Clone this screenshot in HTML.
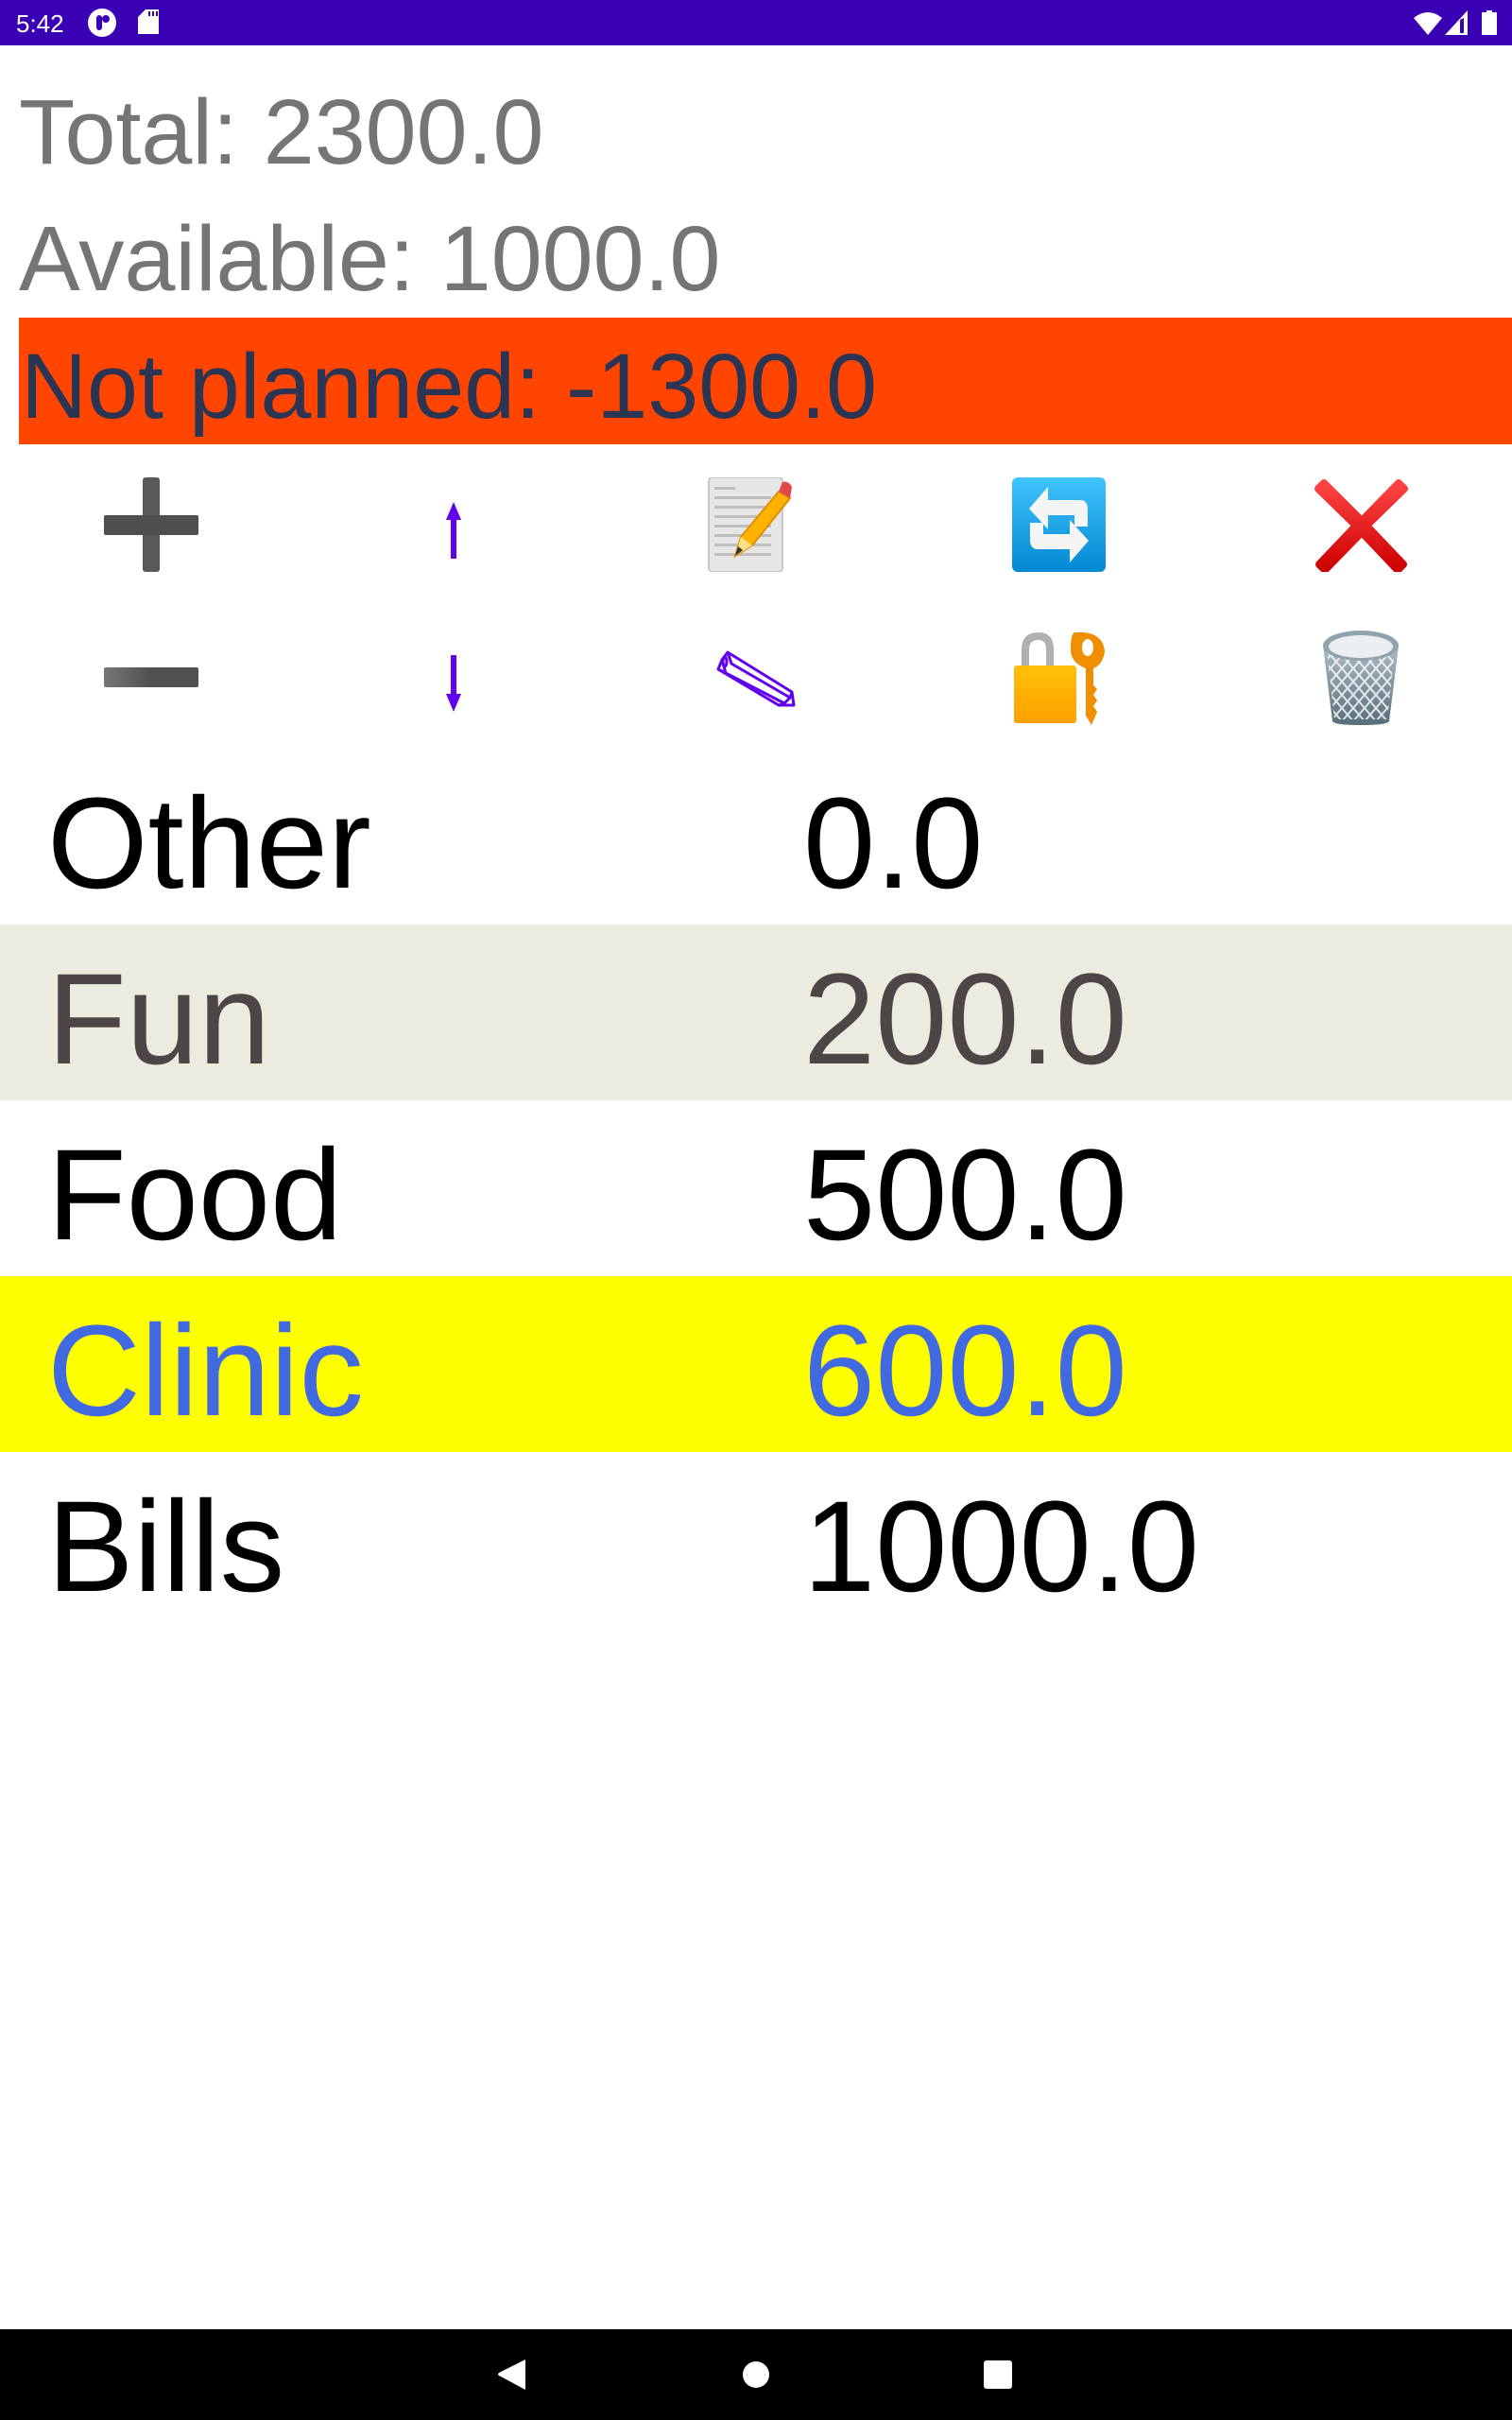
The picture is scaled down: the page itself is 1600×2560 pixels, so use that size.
<!DOCTYPE html>
<html><head><meta charset="utf-8"><style>
*{margin:0;padding:0;box-sizing:border-box}
body{width:1600px;height:2560px;position:relative;background:#fff;overflow:hidden;font-family:"Liberation Sans",sans-serif}
.a{position:absolute;white-space:nowrap;line-height:1}
.row{position:absolute;left:0;width:1600px;height:186px}
.row .n{position:absolute;left:50px;top:32px;font-size:137px;line-height:1}
.row .v{position:absolute;left:850px;top:32px;font-size:137px;line-height:1}
svg{position:absolute}
</style></head><body>
<div class="a" style="left:0;top:0;width:1600px;height:48px;background:#3a00b3"></div>
<div class="a" style="left:17px;top:12px;font-size:26px;color:#fff">5:42</div>
<svg style="left:92px;top:8px" width="32" height="32" viewBox="0 0 32 32"><circle cx="16" cy="16" r="15" fill="#fff"/><rect x="10" y="8" width="6" height="16" rx="3" fill="#3a00b3"/><circle cx="20" cy="12" r="4" fill="#3a00b3"/></svg>
<svg style="left:146px;top:10px" width="24" height="26" viewBox="0 0 24 26"><path d="M8 0H22V26H0V8Z" fill="#fff"/><rect x="11" y="2" width="2" height="5" fill="#3a00b3"/><rect x="15" y="2" width="2" height="5" fill="#3a00b3"/><rect x="19" y="2" width="2" height="5" fill="#3a00b3"/></svg>
<svg style="left:1496px;top:11px" width="30" height="26" viewBox="0 0 30 26"><path d="M0 8Q15 -4 30 8L15 26Z" fill="#fff"/></svg>
<svg style="left:1529px;top:11px" width="24" height="26" viewBox="0 0 24 26"><path d="M24 0V26H0Z" fill="#fff"/><path d="M16 10V24H20V8Z" fill="#3a00b3"/></svg>
<svg style="left:1568px;top:11px" width="16" height="26" viewBox="0 0 16 26"><rect x="5" y="0" width="6" height="3" fill="#fff"/><rect x="0" y="2" width="16" height="24" rx="1" fill="#fff"/></svg>

<div class="a" style="left:20px;top:91px;font-size:97px;color:#757575">Total: 2300.0</div>
<div class="a" style="left:20px;top:225px;font-size:97px;color:#757575">Available: 1000.0</div>
<div class="a" style="left:20px;top:336px;width:1580px;height:134px;background:#ff4500"></div>
<div class="a" style="left:22px;top:360px;font-size:97px;color:#2b3452">Not planned: -1300.0</div>

<svg style="left:110px;top:505px" width="100" height="100" viewBox="0 0 100 100"><rect x="41" y="0" width="18" height="100" rx="3" fill="#595959"/><rect x="0" y="40" width="100" height="21" rx="2" fill="#4f4f4f"/></svg>
<svg style="left:110px;top:706px" width="100" height="22" viewBox="0 0 100 22"><defs><linearGradient id="gm"><stop offset="0" stop-color="#777"/><stop offset=".5" stop-color="#505050"/></linearGradient></defs><rect x="0" y="0" width="100" height="21" rx="2" fill="url(#gm)"/></svg>
<svg style="left:468px;top:530px" width="24" height="64" viewBox="0 0 24 64"><path d="M12 1L4 20H9V61H15V20H20Z" fill="#6200ee"/></svg>
<svg style="left:468px;top:690px" width="24" height="64" viewBox="0 0 24 64"><path d="M12 63L4 44H9V3H15V44H20Z" fill="#6200ee"/></svg>
<svg style="left:748px;top:505px" width="104" height="100" viewBox="0 0 104 100"><rect x="2" y="0" width="78" height="100" rx="4" fill="#e6e6e6" stroke="#c8c8c8" stroke-width="2"/><g fill="#bdbdbd"><rect x="8" y="10" width="22" height="3"/><rect x="8" y="20" width="60" height="3"/><rect x="8" y="30" width="60" height="3"/><rect x="8" y="40" width="60" height="3"/><rect x="8" y="50" width="60" height="3"/><rect x="8" y="60" width="60" height="3"/><rect x="8" y="70" width="60" height="3"/><rect x="8" y="80" width="60" height="3"/></g><path d="M30 83L36 63L76 15L88 22L48 72Z" fill="#ffb300" stroke="#e08e00" stroke-width="2"/><path d="M76 15L80 5Q86 3 90 10L88 22Z" fill="#e04848"/><path d="M30 83L36 63L48 72Z" fill="#ffe08a"/><path d="M30 83L33 73L38 77Z" fill="#333"/></svg>
<svg style="left:1071px;top:505px" width="99" height="100" viewBox="0 0 99 100"><defs><linearGradient id="gb" x1="0" y1="0" x2="0" y2="1"><stop offset="0" stop-color="#40c4ff"/><stop offset="1" stop-color="#0288d1"/></linearGradient></defs><rect width="99" height="100" rx="6" fill="url(#gb)"/><path d="M18 33L38 10V24H72Q80 24 80 34V52L66 52V40H38V55Z" fill="#f5f5f5"/><path d="M81 67L61 90V76H27Q19 76 19 66V48L33 48V60H61V45Z" fill="#f5f5f5"/></svg>
<svg style="left:1391px;top:505px" width="99" height="100" viewBox="0 0 99 100"><defs><linearGradient id="gr" x1="0" y1="0" x2="0" y2="1"><stop offset="0" stop-color="#f44"/><stop offset="1" stop-color="#c00"/></linearGradient></defs><path d="M10 6L50 46L89 6L95 12L55 51L94 92L88 98L50 58L11 98L5 92L44 51L4 12Z" fill="url(#gr)" stroke="url(#gr)" stroke-width="8" stroke-linejoin="round"/></svg>
<svg style="left:758px;top:686px" width="86" height="64" viewBox="0 0 86 64"><g fill="none" stroke="#6200ee" stroke-width="3" stroke-linejoin="round"><path d="M6 12L12 4L80 46L82 60L66 60L2 22Z"/><path d="M6 12L10 26L2 22"/><path d="M10 26L72 58L66 60"/><path d="M12 4L16 16L78 52"/><path d="M72 58L78 52L80 46"/><ellipse cx="9" cy="14" rx="2" ry="5"/></g></svg>
<svg style="left:1071px;top:665px" width="100" height="104" viewBox="0 0 100 104"><defs><linearGradient id="gy" x1="0" y1="0" x2="0" y2="1"><stop offset="0" stop-color="#ffc107"/><stop offset="1" stop-color="#ffa000"/></linearGradient></defs><path d="M10 40V22Q10 4 28 4Q44 4 44 22V40H36V22Q36 12 28 12Q18 12 18 22V40Z" fill="#b0b0b0"/><rect x="2" y="39" width="66" height="61" rx="3" fill="url(#gy)"/><path d="M66 4Q96 2 98 24Q96 38 86 42V60L90 64L86 70L90 76L86 82L90 88L84 102L78 92V42Q62 36 62 22Q62 6 66 4Z" fill="#ef8f00"/><ellipse cx="80" cy="20" rx="6" ry="9" fill="#fff"/></svg>
<svg style="left:1396px;top:665px" width="88" height="104" viewBox="0 0 88 104"><defs><linearGradient id="gw" x1="0" y1="0" x2="0" y2="1"><stop offset="0" stop-color="#b0bec5"/><stop offset="1" stop-color="#546e7a"/></linearGradient><pattern id="pw" width="12" height="14" patternUnits="userSpaceOnUse"><path d="M0 0L6 7L0 14M12 0L6 7L12 14" fill="none" stroke="#fff" stroke-width="2"/></pattern></defs><path d="M4 18L14 98Q16 102 44 102Q72 102 74 98L84 18Z" fill="url(#gw)"/><path d="M8 22L16 96H72L80 22Z" fill="url(#pw)" opacity=".8"/><ellipse cx="44" cy="18" rx="40" ry="16" fill="#90a4ae"/><ellipse cx="44" cy="19" rx="34" ry="12" fill="#eceff1"/></svg>

<div class="row" style="top:792px"><div class="n">Other</div><div class="v">0.0</div></div>
<div class="row" style="top:978px;background:#ebebdf;color:#4e4646"><div class="n">Fun</div><div class="v">200.0</div></div>
<div class="row" style="top:1164px"><div class="n">Food</div><div class="v">500.0</div></div>
<div class="row" style="top:1350px;background:#ffff00;color:#4169e1"><div class="n">Clinic</div><div class="v">600.0</div></div>
<div class="row" style="top:1536px"><div class="n">Bills</div><div class="v">1000.0</div></div>

<div class="a" style="left:0;top:2464px;width:1600px;height:96px;background:#000"></div>
<svg style="left:526px;top:2495px" width="32" height="34" viewBox="0 0 32 34"><path d="M30 1V33L2 18Q0 17 2 15Z" fill="#fff"/></svg>
<svg style="left:785px;top:2497px" width="30" height="30" viewBox="0 0 30 30"><circle cx="15" cy="15" r="14" fill="#fff"/></svg>
<svg style="left:1040px;top:2497px" width="32" height="30" viewBox="0 0 32 30"><rect x="1" y="0" width="30" height="30" rx="3" fill="#fff"/></svg>
</body></html>
